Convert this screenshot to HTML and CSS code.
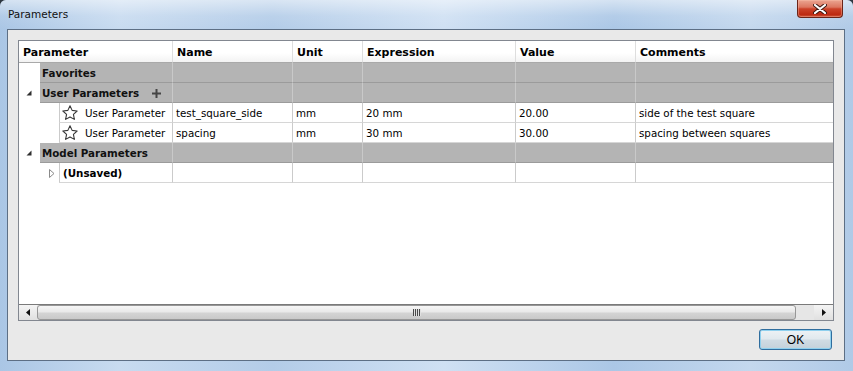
FILE: index.html
```html
<!DOCTYPE html>
<html lang="en">
<head>
  <meta charset="UTF-8" />
  <title>Parameters</title>
  <link rel="stylesheet" href="styles.css">
</head>
<body>
<div class="window">
  <!-- Title bar -->
  <div class="titlebar">
    <span class="title">Parameters</span>
    <button class="close" aria-label="Close">
      <svg width="14" height="10" viewBox="0 0 14 10">
        <path d="M2 1 L12 9 M12 1 L2 9" stroke="#3b1710" stroke-width="4" stroke-linecap="round"/>
        <path d="M2 1 L12 9 M12 1 L2 9" stroke="#fff" stroke-width="2.2" stroke-linecap="round"/>
      </svg>
    </button>
  </div>

  <div class="client">
    <div class="panel">
      <div class="row head">
        <div class="cell">Parameter</div>
        <div class="cell">Name</div>
        <div class="cell">Unit</div>
        <div class="cell">Expression</div>
        <div class="cell">Value</div>
        <div class="cell">Comments</div>
      </div>

      <div class="row group">
        <div class="tree">
          <span class="indent"></span>
          <span class="label">Favorites</span>
        </div>
        <div class="cell"></div><div class="cell"></div><div class="cell"></div><div class="cell"></div><div class="cell"></div>
      </div>

      <div class="row group">
        <div class="tree">
          <span class="indent">
            <svg class="twisty" width="6" height="6" viewBox="0 0 6 6"><polygon points="5.5,0.5 5.5,5.5 0.5,5.5" fill="#303030"/></svg>
          </span>
          <span class="label">User Parameters
            <svg class="add" width="9" height="9" viewBox="0 0 9 9"><rect x="0" y="3.5" width="9" height="2" fill="#454545"/><rect x="3.5" y="0" width="2" height="9" fill="#454545"/></svg>
          </span>
        </div>
        <div class="cell"></div><div class="cell"></div><div class="cell"></div><div class="cell"></div><div class="cell"></div>
      </div>

      <div class="row param">
        <div class="tree">
          <span class="indent deep"></span>
          <span class="label">
            <svg class="star" width="16" height="16" viewBox="0 0 16 16"><polygon points="8,0.8 10.12,5.39 15.13,5.98 11.42,9.41 12.41,14.37 8,11.9 3.59,14.37 4.58,9.41 0.87,5.98 5.88,5.39" fill="#fff" stroke="#3a3a3a" stroke-width="1.1" stroke-linejoin="round"/></svg>
            User Parameter
          </span>
        </div>
        <div class="cell">test_square_side</div>
        <div class="cell">mm</div>
        <div class="cell">20 mm</div>
        <div class="cell">20.00</div>
        <div class="cell">side of the test square</div>
      </div>

      <div class="row param">
        <div class="tree">
          <span class="indent deep"></span>
          <span class="label">
            <svg class="star" width="16" height="16" viewBox="0 0 16 16"><polygon points="8,0.8 10.12,5.39 15.13,5.98 11.42,9.41 12.41,14.37 8,11.9 3.59,14.37 4.58,9.41 0.87,5.98 5.88,5.39" fill="#fff" stroke="#3a3a3a" stroke-width="1.1" stroke-linejoin="round"/></svg>
            User Parameter
          </span>
        </div>
        <div class="cell">spacing</div>
        <div class="cell">mm</div>
        <div class="cell">30 mm</div>
        <div class="cell">30.00</div>
        <div class="cell">spacing between squares</div>
      </div>

      <div class="row group">
        <div class="tree">
          <span class="indent">
            <svg class="twisty" width="6" height="6" viewBox="0 0 6 6"><polygon points="5.5,0.5 5.5,5.5 0.5,5.5" fill="#303030"/></svg>
          </span>
          <span class="label">Model Parameters</span>
        </div>
        <div class="cell"></div><div class="cell"></div><div class="cell"></div><div class="cell"></div><div class="cell"></div>
      </div>

      <div class="row param">
        <div class="tree">
          <span class="indent deep">
            <svg class="twisty closed" width="6" height="9" viewBox="0 0 6 9"><polygon points="0.5,0.5 5,4.5 0.5,8.5" fill="#fff" stroke="#8a8a8a" stroke-width="1"/></svg>
          </span>
          <span class="label bold">(Unsaved)</span>
        </div>
        <div class="cell"></div><div class="cell"></div><div class="cell"></div><div class="cell"></div><div class="cell"></div>
      </div>

      <div class="filler"></div>

      <!-- Horizontal scrollbar -->
      <div class="hscroll">
        <span class="arrow">
          <svg width="4" height="7" viewBox="0 0 4 7"><polygon points="4,0 4,7 0,3.5" fill="#111"/></svg>
        </span>
        <div class="track">
          <div class="thumb" style="width: 97.7%"><span class="grip"></span></div>
        </div>
        <span class="arrow right">
          <svg width="4" height="7" viewBox="0 0 4 7"><polygon points="0,0 0,7 4,3.5" fill="#111"/></svg>
        </span>
      </div>
    </div>

    <div class="buttons">
      <button class="ok">OK</button>
    </div>
  </div>
</div>
</body>
</html>
```

FILE: styles.css
```css
* { box-sizing: border-box; margin: 0; padding: 0; }
body {
  background: #2d3640;
  font-family: "DejaVu Sans", Verdana, sans-serif;
  font-size: 10.3px;
  color: #000;
}
.window {
  width: 853px; height: 371px;
  display: flex; flex-direction: column;
  border-radius: 6px 6px 0 0;
  background: linear-gradient(90deg, #aac6e5 0%, #c8dbf0 14%, #b3cce8 32%, #cfe0f3 52%, #abc7e6 72%, #c4d8ee 88%, #b0cae7 100%);
}
.titlebar {
  height: 29px;
  display: flex; align-items: flex-start;
  padding-left: 8px;
  border-radius: 6px 6px 0 0;
  background: linear-gradient(rgba(255,255,255,0.5), rgba(255,255,255,0.1) 55%, rgba(255,255,255,0));
}
.title { margin-top: 8px; line-height: 13px; font-size: 10.5px; color: #111; }
.close {
  margin-left: auto; margin-right: 10px;
  width: 46px; height: 18px;
  border: 1px solid #6b2418; border-top: none;
  border-radius: 0 0 4px 4px;
  background: linear-gradient(#eba591 0%, #dc7660 42%, #cc4229 52%, #bd2a12 85%, #cf573c 100%);
  display: flex; align-items: center; justify-content: center;
  box-shadow: inset 0 0 0 1px rgba(255,200,180,0.35);
}
.client {
  margin: 0 8px 0 7px;
  border: 1px solid #5d6f85;
  background: #e9e9e9;
  padding: 10px;
  display: flex; flex-direction: column;
}
.panel {
  height: 281px;
  border: 1px solid #828790;
  background: #fff;
  display: flex; flex-direction: column;
}
.row {
  display: grid;
  grid-template-columns: 154px 120px 70px 153px 120px 1fr;
  height: 20px;
}
.cell {
  display: flex; align-items: center;
  padding: 1px 0 0 3px;
  border-right: 1px solid #cbcbcb;
  border-bottom: 1px solid #d6d6d6;
  white-space: nowrap;
}
.row .cell:last-child { border-right: none; }
.head { height: 22px; background: linear-gradient(#fff 0%, #fff 55%, #f1f1f1 100%); }
.head .cell {
  padding-left: 4px; font-weight: bold; font-size: 11px;
  border-right-color: #dedede;
  border-bottom: 1px solid #a9a9a9;
}
.tree { display: flex; }
.indent {
  width: 21px; flex: none;
  display: flex; align-items: center;
  padding-left: 7px;
}
.indent.deep { width: 40px; padding-left: 30px; }
.label {
  flex: 1;
  display: flex; align-items: center;
  padding-top: 1px;
  border-right: 1px solid #cbcbcb;
  border-bottom: 1px solid #d6d6d6;
  white-space: nowrap;
}
.group .cell, .group .label {
  background: #b4b4b4;
  border-bottom-color: #9b9b9b;
  border-right-color: #c9c9c9;
}
.group .label { padding-left: 2px; font-weight: bold; color: #111; }
.add { margin-left: 13px; }
.param .label { border-left: 1px solid #cbcbcb; padding-left: 2px; }
.star { margin-right: 7px; }
.param .label.bold { font-weight: bold; padding-left: 3px; }
.twisty.closed { margin-top: 1px; }
.filler { flex: 1; }
.hscroll {
  height: 16px;
  display: flex;
  border-top: 1px solid #7a7a7a;
  background: #e8e8e8;
}
.arrow {
  width: 18px; flex: none;
  display: flex; align-items: center; justify-content: center;
  background: linear-gradient(#f4f4f4, #e0e0e0);
}
.arrow.right { width: 19px; }
.track { flex: 1; display: flex; background: #e6e6e6; }
.thumb {
  height: 100%;
  border: 1px solid #979797;
  border-radius: 3px;
  background: linear-gradient(#f6f6f6 0%, #e9e9e9 45%, #d4d4d4 55%, #c9c9c9 100%);
  display: flex; align-items: center; justify-content: center;
}
.grip {
  width: 8px; height: 7px;
  background: repeating-linear-gradient(90deg, #4a4a4a 0 1px, #e0e0e0 1px 2px);
}
.buttons { margin-top: 8px; display: flex; justify-content: flex-end; padding-right: 2px; }
.ok {
  width: 73px; height: 21px;
  border: 1px solid #2f6d9e;
  border-radius: 3px;
  background: linear-gradient(#edf2f5 0%, #e1e9ee 45%, #cfdbe3 55%, #c3d1da 100%);
  box-shadow: inset 0 0 0 1px #8fd0ee;
  font-family: "Liberation Sans", Arial, sans-serif;
  font-size: 12px; color: #000;
}
```
